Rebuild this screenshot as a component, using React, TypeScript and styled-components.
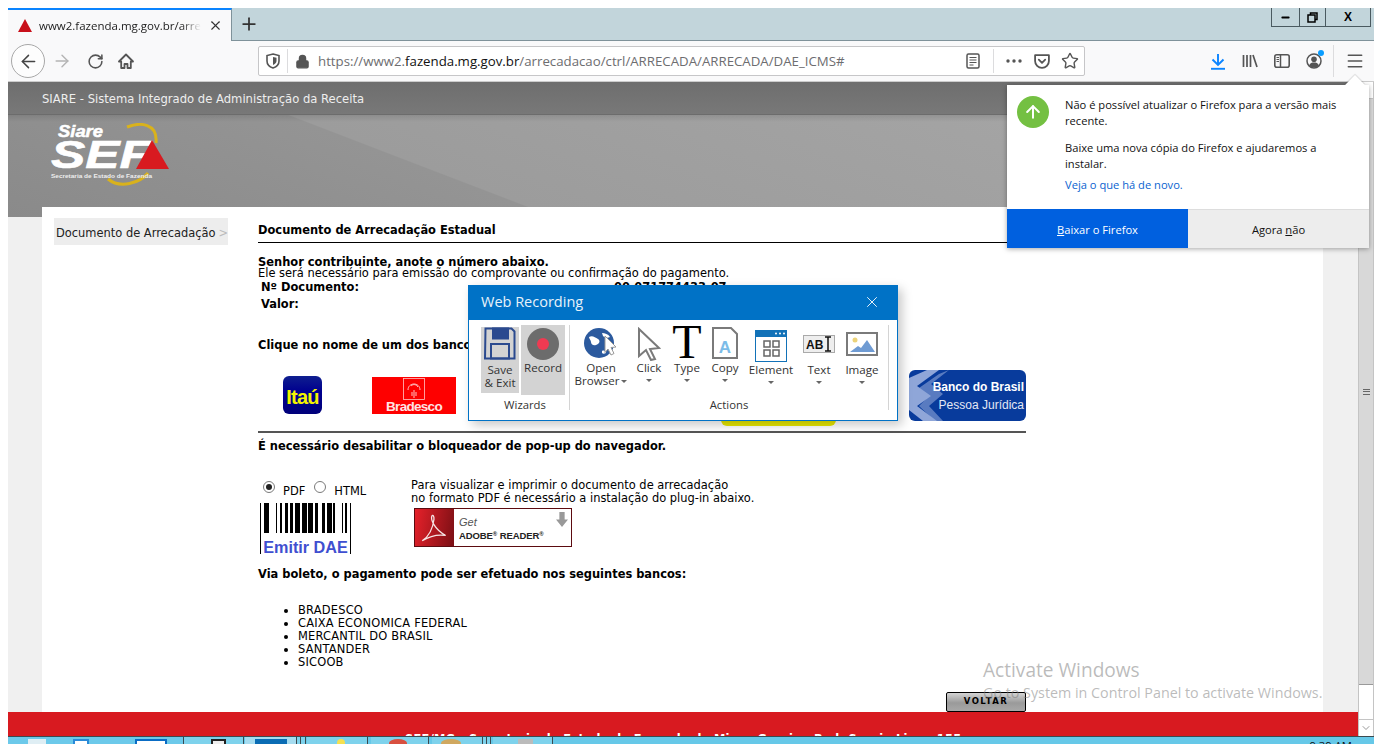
import React from "react";
import styled, { createGlobalStyle } from "styled-components";
import { ArrowLeft, ArrowRight, RotateCw, Lock, Star, X, Plus, Minus, Menu, ArrowUp, ChevronDown } from "lucide-react";

const Global = createGlobalStyle`
  html, body { margin: 0; padding: 0; background: #fff; height: 100%; overflow: hidden; }
  #root { height: 100%; }
`;

const ui = `"Open Sans", "Noto Sans", sans-serif`;
const web = `"DejaVu Sans", Verdana, sans-serif`;

const Screen = styled.div`
  position: relative;
  width: 1382px;
  height: 744px;
  overflow: hidden;
  padding: 8px 8px 0 8px;
  box-sizing: border-box;
  display: flex;
  flex-direction: column;
`;

/* browser chrome */
const TabStrip = styled.div`
  height: 33px;
  flex: none;
  display: flex;
  background: #c2d5db;
  border-bottom: 1px solid #7f929a;
  box-sizing: border-box;
`;
const Tab = styled.div`
  width: 224px;
  height: 33px;
  box-sizing: border-box;
  background: #f9f9fa;
  border-top: 2px solid #0a84ff;
  border-right: 1px solid #7f929a;
  display: flex;
  align-items: center;
  padding: 0 8px 0 10px;
  gap: 7px;
  font: 11.5px ${ui};
  color: #222;
`;
const TabTitle = styled.span`
  flex: 1;
  white-space: nowrap;
  overflow: hidden;
  -webkit-mask-image: linear-gradient(to right, #000 88%, transparent);
  mask-image: linear-gradient(to right, #000 88%, transparent);
`;
const NewTab = styled.div`
  width: 34px;
  display: flex;
  align-items: center;
  justify-content: center;
  color: #333;
  margin-top: -1px;
`;
const WinControls = styled.div`
  margin-left: auto;
  margin-right: 3px;
  width: 100px;
  height: 19px;
  display: flex;
  box-sizing: border-box;
  border: 1px solid #4a5a60;
  border-top: 0;
`;
const WinButton = styled.div<{ $w: number }>`
  width: ${(p) => p.$w}px;
  display: flex;
  align-items: center;
  justify-content: center;
  border-left: 1px solid #4a5a60;
  color: #000;
  font: bold 12px "Liberation Sans", sans-serif;
  &:first-child { border-left: 0; }
`;
const Toolbar = styled.div`
  height: 41px;
  flex: none;
  background: #f9f9fa;
  border-bottom: 1px solid #ccc;
  box-sizing: border-box;
  display: flex;
  align-items: center;
  color: #555;
`;
const BackCircle = styled.div`
  width: 34px;
  height: 34px;
  margin-left: 3px;
  border: 1px solid #a8a8a8;
  border-radius: 50%;
  background: #fdfdfd;
  box-sizing: border-box;
  display: flex;
  align-items: center;
  justify-content: center;
  color: #444;
`;
const ToolIcon = styled.div<{ $w?: number; $c?: string }>`
  width: ${(p) => p.$w ?? 32}px;
  flex: none;
  display: flex;
  align-items: center;
  justify-content: center;
  position: relative;
  color: ${(p) => p.$c ?? "#555"};
`;
const UrlBar = styled.div`
  width: 827px;
  height: 30px;
  flex: none;
  margin-left: 117px;
  background: #fff;
  border: 1px solid #c6c6c8;
  border-radius: 2px;
  box-sizing: border-box;
  display: flex;
  align-items: center;
`;
const VDivider = styled.div<{ $h: number }>`
  width: 1px;
  height: ${(p) => p.$h}px;
  background: #dcdcde;
  flex: none;
`;
const UrlText = styled.div`
  flex: 1;
  padding-left: 1px;
  font: 13.25px ${ui};
  color: #6d6d70;
  white-space: nowrap;
  b { font-weight: 400; color: #111; }
`;
const Spacer = styled.div<{ $w: number }>`
  width: ${(p) => p.$w}px;
  flex: none;
`;
const Dot = styled.span`
  position: absolute;
  top: -3px;
  right: 6px;
  width: 6px;
  height: 6px;
  border-radius: 50%;
  background: #0a9dff;
`;

/* page */
const Viewport = styled.div`
  flex: 1;
  min-height: 0;
  display: flex;
`;
const Page = styled.div`
  width: 1350px;
  display: flex;
  flex-direction: column;
  background: #f0f0f0;
  overflow: hidden;
`;
const TitleBand = styled.div`
  height: 33px;
  flex: none;
  background: linear-gradient(#6e6e6e, #787878);
  border-bottom: 1px solid #6c6c6c;
  box-sizing: border-box;
  padding: 10px 0 0 34px;
  font: 11.6px ${web};
  color: #eee;
`;
const Hero = styled.div`
  height: 102px;
  flex: none;
  padding: 8px 0 0 42px;
  box-sizing: border-box;
  background:
    linear-gradient(rgba(0, 0, 0, 0.1), transparent 7px),
    linear-gradient(21deg, #8a8a8a 0, #949494 33.7%, #9c9c9c 33.9%, #a8a8a8 100%);
`;
const Sheet = styled.div`
  flex: 1;
  min-height: 0;
  margin: -10px 35px 0 34px;
  background: #fff;
  display: flex;
  position: relative;
`;
const SideCol = styled.div`
  width: 216px;
  flex: none;
  padding: 11px 0 0 12px;
  box-sizing: border-box;
`;
const SideItem = styled.div`
  width: 174px;
  height: 27px;
  background: #ededed;
  box-sizing: border-box;
  padding: 8px 0 0 2px;
  font: 11.45px ${web};
  color: #222;
  white-space: nowrap;
  display: flex;
  span { color: #bbb; margin-left: 3px; }
`;
const Main = styled.div`
  width: 768px;
  font: 11.45px/11px ${web};
  color: #000;
`;
const DocTitle = styled.div`
  font: bold 11.45px/14px ${web};
  padding: 16px 0 5px;
  border-bottom: 1px solid #000;
  height: 14px;
`;
const Bold = styled.div<{ $top: number }>`
  font-weight: bold;
  margin-top: ${(p) => p.$top}px;
  white-space: nowrap;
`;
const Plain = styled.div`
  white-space: nowrap;
`;
const DocRow = styled.div<{ $top: number }>`
  display: grid;
  grid-template-columns: 353px 1fr;
  padding-left: 3px;
  margin-top: ${(p) => p.$top}px;
  font-weight: bold;
`;
const BankRow = styled.div`
  position: relative;
  height: 62px;
  margin-top: 13px;
  display: flex;
  align-items: center;
`;
const Itau = styled.div`
  width: 39px;
  height: 38px;
  margin-left: 25px;
  border-radius: 6px;
  background: linear-gradient(#0f1f8f, #00008f 40%, #00007a);
  color: #f4f400;
  font: bold 20px "Liberation Sans", sans-serif;
  letter-spacing: -0.8px;
  display: flex;
  align-items: center;
  justify-content: center;
  padding-top: 5px;
  box-sizing: border-box;
`;
const Bradesco = styled.div`
  width: 84px;
  height: 37px;
  margin-left: 50px;
  background: #fe0000;
  color: #ffe4e4;
  display: flex;
  flex-direction: column;
  align-items: center;
  font: bold 13.5px "Liberation Sans", sans-serif;
  letter-spacing: -0.7px;
  line-height: 14px;
  svg { display: block; margin-top: 1px; }
`;
const YellowBank = styled.div`
  width: 115px;
  height: 62px;
  margin-left: 265px;
  border-radius: 6px;
  background: #e8e800;
`;
const BB = styled.div`
  width: 117px;
  height: 51px;
  margin-left: 73px;
  border-radius: 6px;
  background: #083b9c;
  color: #fff;
  position: relative;
  overflow: hidden;
  font: 12px/18px "Liberation Sans", sans-serif;
  text-align: right;
  padding: 8px 2px 0 0;
  box-sizing: border-box;
  svg { position: absolute; left: 0; top: 0; }
  b, span { display: block; position: relative; }
  span { color: #e4e8f4; }
`;
const Rule = styled.div`
  height: 2px;
  background: #555;
  margin-top: 5px;
`;
const OptionsRow = styled.div`
  display: flex;
  margin-top: 27px;
`;
const PdfCol = styled.div`
  width: 153px;
  flex: none;
`;
const Radios = styled.div`
  height: 24px;
  box-sizing: border-box;
  padding: 2px 0 0 5px;
  display: flex;
  align-items: flex-start;
  span { margin: 5px 0 0 8px; }
  span + i { margin-left: 9px; }
`;
const Radio = styled.i<{ $on?: boolean }>`
  display: block;
  width: 12px;
  height: 12px;
  border: 1px solid #7a7a7a;
  border-radius: 50%;
  box-sizing: border-box;
  background: #fff;
  position: relative;
  &::after {
    content: "";
    display: ${(p) => (p.$on ? "block" : "none")};
    position: absolute;
    inset: 2px;
    border-radius: 50%;
    background: #222;
  }
`;
const Barcode = styled.div`
  width: 91px;
  margin-left: 2px;
  height: 51px;
  box-sizing: border-box;
  border-left: 1px solid #000;
  border-right: 1px solid #000;
  color: #3f4fd0;
  font: bold 16.2px/16px "Liberation Sans", sans-serif;
  text-align: center;
  white-space: nowrap;
  svg { display: block; margin-bottom: 6px; }
`;
const PdfNote = styled.div`
  line-height: 13px;
  white-space: nowrap;
`;
const AdobeBadge = styled.div`
  width: 158px;
  height: 39px;
  margin: 3px 0 0 3px;
  border: 1px solid #5c0b10;
  box-sizing: border-box;
  display: flex;
  background: #fff;
  position: relative;
`;
const AdobeLogo = styled.div`
  width: 39px;
  background: linear-gradient(100deg, #e6212a, #7a0f14);
  display: flex;
  align-items: center;
  justify-content: center;
`;
const AdobeText = styled.div`
  padding: 7px 0 0 5px;
  font: 9.5px/13px "Liberation Sans", sans-serif;
  color: #333;
  i { display: block; font-size: 11px; line-height: 12px; color: #555; }
  b { font-weight: bold; color: #222; letter-spacing: -0.1px; }
  small { font-size: 6px; vertical-align: 3px; }
`;
const AdobeArrow = styled.div`
  position: absolute;
  right: 3px;
  top: 3px;
  width: 12px;
  height: 15px;
  background: #999;
  clip-path: polygon(28% 0, 72% 0, 72% 50%, 100% 50%, 50% 100%, 0 50%, 28% 50%);
`;
const BankList = styled.ul`
  margin: 24px 0 0;
  padding: 0 0 0 40px;
  line-height: 13px;
  letter-spacing: 0.2px;
  list-style: disc;
`;
const Voltar = styled.div`
  position: absolute;
  left: 904px;
  top: 485px;
  width: 80px;
  height: 20px;
  border: 1px solid #000;
  border-radius: 2px;
  box-sizing: border-box;
  background: linear-gradient(#d4d4d4, #9a9a9a 55%, #a8a8a8);
  font: bold 8.5px "DejaVu Sans", sans-serif;
  letter-spacing: 1.4px;
  text-align: center;
  line-height: 17px;
`;
const Footer = styled.div`
  height: 24px;
  flex: none;
  background: #d81a20;
  color: #fff;
  overflow: hidden;
  font: bold 11.45px/14px ${web};
  letter-spacing: 0.27px;
  padding: 20px 0 0 397px;
  white-space: nowrap;
  box-sizing: border-box;
`;
const Scrollbar = styled.div`
  width: 16px;
  flex: none;
  background: #fff;
  border: 1px solid #c4c4c4;
  border-width: 0 1px;
  box-sizing: border-box;
  display: flex;
  flex-direction: column;
`;
const ScrollEnd = styled.div`
  height: 16px;
  flex: none;
  display: flex;
  align-items: center;
  justify-content: center;
  color: #777;
  border-bottom: 1px solid #c4c4c4;
`;
const ScrollEndBottom = styled(ScrollEnd)`
  margin-top: auto;
  border-bottom: 0;
  border-top: 1px solid #c4c4c4;
`;
const Thumb = styled.div`
  height: 585px;
  background: #d8d8d8;
  border-bottom: 1px solid #999;
  display: flex;
  align-items: center;
  justify-content: center;
  &::after {
    content: "";
    width: 7px;
    height: 6px;
    background: repeating-linear-gradient(#666 0 1px, transparent 1px 2.5px);
  }
`;
const Taskbar = styled.div`
  height: 8px;
  flex: none;
  background: #66c8e8;
  border-top: 1px solid #3b4a50;
  box-sizing: border-box;
  display: flex;
  position: relative;
  overflow: hidden;
`;
const TaskCell = styled.div<{ $w: number; $active?: boolean; $plain?: boolean; $gap?: number }>`
  width: ${(p) => p.$w}px;
  flex: none;
  box-sizing: border-box;
  margin-right: ${(p) => p.$gap ?? 0}px;
  border-right: 1px solid #3b4a50;
  background: ${(p) => (p.$plain ? "#6cc9ea" : p.$active ? "#a6dcf0" : "#7ed2ec")};
  display: flex;
`;
const TaskIcon = styled.div<{ $x: number; $w: number; $bg: string; $round?: boolean; $border?: string }>`
  width: ${(p) => p.$w}px;
  height: 8px;
  margin: 2px 0 0 ${(p) => p.$x}px;
  background: ${(p) => p.$bg};
  border: ${(p) => (p.$border ? `2px solid ${p.$border}` : "0")};
  box-sizing: border-box;
  border-radius: ${(p) => (p.$round ? "50% 50% 0 0" : "0")};
`;
const Clock = styled.div`
  margin-left: auto;
  margin-right: 22px;
  margin-top: 1px;
  font: 11.3px "Open Sans", sans-serif;
  color: #111;
  line-height: 16px;
`;

/* update doorhanger */
const Doorhanger = styled.div`
  position: absolute;
  left: 1007px;
  top: 85px;
  width: 362px;
  height: 163px;
  background: #fff;
  box-shadow: 0 1px 5px rgba(0, 0, 0, 0.35);
  display: flex;
  flex-direction: column;
  font: 11.15px/16px ${ui};
  color: #111;
  &::before {
    content: "";
    position: absolute;
    top: -7px;
    right: 7px;
    width: 14px;
    height: 14px;
    background: #fff;
    transform: rotate(45deg);
    box-shadow: -1px -1px 1px rgba(0, 0, 0, 0.12);
  }
`;
const DoorBody = styled.div`
  flex: 1;
  display: flex;
  padding: 12px 16px 0 10px;
  gap: 16px;
  position: relative;
`;
const GreenDot = styled.div`
  width: 32px;
  height: 32px;
  margin-top: -1px;
  border-radius: 50%;
  background: #74c042;
  color: #fff;
  flex: none;
  display: flex;
  align-items: center;
  justify-content: center;
`;
const DoorText = styled.div`
  p { margin: 0 0 11px; }
  a { color: #0a63d0; display: block; margin-top: -6px; }
`;
const DoorButtons = styled.div`
  display: flex;
  height: 39px;
  border-top: 1px solid #ddd;
  box-sizing: border-box;
  u { text-decoration: underline; }
`;
const DoorButton = styled.div<{ $primary?: boolean }>`
  flex: 1;
  display: flex;
  align-items: center;
  justify-content: center;
  padding-top: 2px;
  background: ${(p) => (p.$primary ? "#0060df" : "#ededed")};
  color: ${(p) => (p.$primary ? "#fff" : "#111")};
  margin-top: ${(p) => (p.$primary ? "-1px" : "0")};
`;

/* Web Recording dialog */
const Dialog = styled.div`
  position: absolute;
  left: 468px;
  top: 285px;
  width: 430px;
  height: 136px;
  background: #fff;
  border: 1px solid #0072c6;
  box-sizing: border-box;
  box-shadow: 4px 4px 10px rgba(0, 0, 0, 0.22);
  font: 12px ${ui};
  color: #333;
`;
const DialogHead = styled.div`
  height: 34px;
  box-sizing: border-box;
  padding: 0 16px 3px 12px;
  background: #0072c6;
  color: #e8f2fa;
  font-size: 14.5px;
  display: flex;
  align-items: center;
  justify-content: space-between;
`;
const Ribbon = styled.div`
  display: flex;
  padding-left: 12px;
  height: 100px;
`;
const RibbonGroup = styled.div<{ $w: number }>`
  width: ${(p) => p.$w}px;
  flex: none;
  border-right: 1px solid #d4d4d4;
  height: 85px;
  margin-top: 5px;
  display: flex;
  flex-direction: column;
  position: relative;
  box-sizing: border-box;
`;
const GroupItems = styled.div`
  display: flex;
  align-items: flex-start;
  height: 70px;
`;
const GroupLabel = styled.div`
  position: absolute;
  left: 0;
  right: 0;
  top: 72px;
  text-align: center;
  font-size: 11.3px;
  line-height: 16px;
`;
const Tool = styled.div<{ $w: number; $bg?: boolean; $top?: number; $h?: number }>`
  width: ${(p) => p.$w}px;
  height: ${(p) => (p.$h ? `${p.$h}px` : "auto")};
  flex: none;
  margin-top: ${(p) => p.$top ?? 0}px;
  background: ${(p) => (p.$bg ? "#d3d3d3" : "transparent")};
  display: flex;
  flex-direction: column;
  align-items: center;
  text-align: center;
  font-size: 11.6px;
  line-height: 13px;
  svg { display: block; flex: none; }
`;
const ToolLabel = styled.div<{ $top: number }>`
  margin-top: ${(p) => p.$top}px;
  white-space: nowrap;
`;
const Caret = styled.i`
  display: inline-block;
  border: 3px solid transparent;
  border-top: 3px solid #666;
  border-bottom: 0;
  vertical-align: middle;
  margin-left: 2px;
`;
const CaretBelow = styled(Caret)`
  display: block;
  margin: 5px auto 0;
`;
const RecordDisc = styled.svg`
  margin-top: 3px;
`;

const Watermark = styled.div`
  position: absolute;
  left: 983px;
  top: 659px;
  color: rgba(120, 120, 120, 0.5);
  font: 19.1px/22px ${ui};
  pointer-events: none;
  white-space: nowrap;
  div { font-size: 14.3px; line-height: 24px; }
`;

function PocketIcon() {
  return (
    <svg width="18" height="17" viewBox="0 0 16 16" fill="none" stroke="#555" strokeWidth="1.7" strokeLinejoin="round" strokeLinecap="round">
      <path d="M1.5 2h13v5.500a6.500 6.500 0 0 1-13 0z" />
      <path d="M5 6.200l3 3 3-3" />
    </svg>
  );
}

function ShieldIcon() {
  return (
    <svg width="14" height="16" viewBox="0 0 14 16">
      <path d="M7 1l6 1.500V8c0 3.500-3 6-6 7-3-1-6-3.500-6-7V2.500z" fill="none" stroke="#555" strokeWidth="1.600" />
      <path d="M7 4l3.500 .8V8c0 1.800-1.500 3-3.500 4z" fill="#555" />
    </svg>
  );
}

function ReaderIcon() {
  return (
    <svg width="14" height="16" viewBox="0 0 14 16" fill="none" stroke="#555">
      <rect x="1" y="1" width="12" height="14" rx="1.500" strokeWidth="1.500" />
      <path d="M3.500 4.500h7M3.500 7h7M3.500 9.500h7M3.500 12h4" strokeWidth="1" />
    </svg>
  );
}

function HomeIcon() {
  return (
    <svg width="16" height="16" viewBox="0 0 16 16" fill="none" stroke="#555" strokeWidth="1.800" strokeLinejoin="round">
      <path d="M8 1.500L1 8.500h2.200V15h3.300v-4h3v4h3.300V8.500H15z" />
    </svg>
  );
}

function DownloadIcon() {
  return (
    <svg width="16" height="17" viewBox="0 0 16 17" fill="none" stroke="#0a84ff" strokeWidth="1.900">
      <path d="M8 1v10.500M2.500 6.500L8 12l5.500-5.500" />
      <path d="M1 15.800h14" />
    </svg>
  );
}

function LibraryIcon() {
  return (
    <svg width="16" height="14" viewBox="0 0 16 14" stroke="#555" strokeWidth="1.700" fill="none">
      <path d="M1.500 1v12M5 1v12M8.500 1v12M11 1l4 12" />
    </svg>
  );
}

function SidebarIcon() {
  return (
    <svg width="16" height="14" viewBox="0 0 16 14" fill="none" stroke="#555">
      <rect x=".8" y=".8" width="14.400" height="12.400" rx="2" strokeWidth="1.600" />
      <path d="M6.500 1v12" strokeWidth="1.500" />
      <path d="M2.500 3.500h2.500M2.500 5.500h2.500M2.500 7.500h2.500" strokeWidth="1" />
    </svg>
  );
}

function AccountIcon() {
  return (
    <svg width="16" height="16" viewBox="0 0 16 16" fill="none">
      <circle cx="8" cy="8" r="7" stroke="#555" strokeWidth="1.500" />
      <circle cx="8" cy="6.200" r="2.800" fill="#555" />
      <path d="M3 12.500c1-2.500 3-3 5-3s4 .5 5 3c-1.500 1.500-3 2-5 2s-3.500-.5-5-2z" fill="#555" />
    </svg>
  );
}

function SefLogo() {
  return (
    <svg width="122" height="66" viewBox="0 0 122 66">
      <path d="M77 4C90-1 108 0 106 20M98 50C90 60 70 66 58 56" fill="none" stroke="#d9b21c" strokeWidth="3" />
      <text x="8" y="14" fill="#fff" stroke="#fff" strokeWidth=".5" fontFamily="Liberation Sans" fontWeight="bold" fontStyle="italic" fontSize="16" textLength="45" lengthAdjust="spacingAndGlyphs">Siare</text>
      <text x="1" y="45" fill="#fff" stroke="#fff" strokeWidth=".6" fontFamily="Liberation Sans" fontWeight="bold" fontStyle="italic" fontSize="38" textLength="100" lengthAdjust="spacingAndGlyphs">SEF</text>
      <polygon points="102,17 119,46 86,46" fill="#d81a20" />
      <text x="1" y="55" fill="#eee" fontFamily="Liberation Sans" fontWeight="bold" fontSize="6" textLength="101" lengthAdjust="spacingAndGlyphs">Secretaria de Estado de Fazenda</text>
    </svg>
  );
}

function BradescoMark() {
  return (
    <svg width="22" height="22" viewBox="0 0 22 22" fill="none" stroke="#ffc4c4">
      <rect x=".5" y=".5" width="21" height="21" strokeWidth=".8" />
      <path d="M5 12c0-8 12-8 12 0M8 8c2-2 5-2 7 1M11 12v8M9 14v4M13 14v4" strokeWidth="1" />
    </svg>
  );
}

const BARS = [
  [4, 5], [16, 1], [20, 2], [25, 3], [30, 3], [35, 5], [42, 5], [48, 5], [55, 3], [62, 3], [67, 5], [73, 2], [82, 1], [85, 2],
];

function BarcodeArt() {
  return (
    <svg width="89" height="30" viewBox="0 0 89 30">
      {BARS.map(([x, w]) => (
        <rect key={x} x={x - 1} y="0" width={w} height="30" fill="#000" />
      ))}
    </svg>
  );
}

export default function App() {
  return (
    <Screen>
      <Global />
      <TabStrip>
        <Tab>
          <svg width="14" height="13" viewBox="0 0 14 13"><polygon points="7,0 14,13 0,13" fill="#c8101a" /></svg>
          <TabTitle>www2.fazenda.mg.gov.br/arrecadacao</TabTitle>
          <X size={15} strokeWidth={1.7} color="#333" />
        </Tab>
        <NewTab><Plus size={20} strokeWidth={2.1} /></NewTab>
        <WinControls>
          <WinButton $w={28}><Minus size={11} strokeWidth={4} /></WinButton>
          <WinButton $w={26}>
            <svg width="11" height="11" viewBox="0 0 11 11" fill="none" stroke="#000" strokeWidth="1.500"><rect x="1" y="3" width="7" height="7" /><path d="M3.500 3V1h6.500v6.500H8" /></svg>
          </WinButton>
          <WinButton $w={46}>X</WinButton>
        </WinControls>
      </TabStrip>
      <Toolbar>
        <BackCircle><ArrowLeft size={21} strokeWidth={1.7} /></BackCircle>
        <ToolIcon $w={34} $c="#b4b4b4"><ArrowRight size={20} strokeWidth={1.7} /></ToolIcon>
        <ToolIcon $w={32}><RotateCw size={17} strokeWidth={2.2} /></ToolIcon>
        <ToolIcon $w={30}><HomeIcon /></ToolIcon>
        <UrlBar>
          <ToolIcon $w={28}><ShieldIcon /></ToolIcon>
          <VDivider $h={24} />
          <ToolIcon $w={29}><Lock size={15} strokeWidth={2} fill="#555" /></ToolIcon>
          <UrlText>https://www2.<b>fazenda.mg.gov.br</b>/arrecadacao/ctrl/ARRECADA/ARRECADA/DAE_ICMS#</UrlText>
          <ToolIcon $w={28}><ReaderIcon /></ToolIcon>
          <Spacer $w={6} />
          <VDivider $h={24} />
          <Spacer $w={6} />
          <ToolIcon $w={28}>
            <svg width="16" height="4" viewBox="0 0 16 4" fill="#555"><circle cx="2" cy="2" r="1.700" /><circle cx="8" cy="2" r="1.700" /><circle cx="14" cy="2" r="1.700" /></svg>
          </ToolIcon>
          <ToolIcon $w={28}><PocketIcon /></ToolIcon>
          <ToolIcon $w={28}><Star size={18} strokeWidth={1.9} /></ToolIcon>
        </UrlBar>
        <Spacer $w={117} />
        <ToolIcon $w={32}><DownloadIcon /></ToolIcon>
        <ToolIcon $w={32}><LibraryIcon /></ToolIcon>
        <ToolIcon $w={32}><SidebarIcon /></ToolIcon>
        <ToolIcon $w={32}><AccountIcon /><Dot /></ToolIcon>
        <Spacer $w={3} />
        <VDivider $h={32} />
        <Spacer $w={2} />
        <ToolIcon $w={38}><Menu size={20} strokeWidth={1.8} /></ToolIcon>
      </Toolbar>
      <Viewport>
        <Page>
          <TitleBand>SIARE - Sistema Integrado de Administração da Receita</TitleBand>
          <Hero><SefLogo /></Hero>
          <Sheet>
            <SideCol>
              <SideItem>Documento de Arrecadação<span>&gt;</span></SideItem>
            </SideCol>
            <Main>
              <DocTitle>Documento de Arrecadação Estadual</DocTitle>
              <Bold $top={14}>Senhor contribuinte, anote o número abaixo.</Bold>
              <Plain>Ele será necessário para emissão do comprovante ou confirmação do pagamento.</Plain>
              <DocRow $top={3}><span>Nº Documento:</span><span>00.071774433-07</span></DocRow>
              <DocRow $top={6}><span>Valor:</span></DocRow>
              <Bold $top={30}>Clique no nome de um dos bancos abaixo para efetuar o pagamento.</Bold>
              <BankRow>
                <Itau>Itaú</Itau>
                <Bradesco><BradescoMark />Bradesco</Bradesco>
                <YellowBank />
                <BB>
                  <svg width="60" height="51" viewBox="0 0 60 51" fill="#8fa6d8">
                    <polygon points="0,8 18,0 30,0 8,16 22,26 8,36 28,51 14,51 0,40" />
                    <polygon points="20,26 10,18 30,4 40,0 22,14 34,24 20,36 34,51 26,51 10,36" opacity=".6" />
                  </svg>
                  <b>Banco do Brasil</b>
                  <span>Pessoa Jurídica</span>
                </BB>
              </BankRow>
              <Rule />
              <Bold $top={8}>É necessário desabilitar o bloqueador de pop-up do navegador.</Bold>
              <OptionsRow>
                <PdfCol>
                  <Radios>
                    <Radio $on /><span>PDF</span><Radio /><span>HTML</span>
                  </Radios>
                  <Barcode>
                    <BarcodeArt />
                    Emitir DAE
                  </Barcode>
                </PdfCol>
                <div>
                  <PdfNote>
                    Para visualizar e imprimir o documento de arrecadação<br />
                    no formato PDF é necessário a instalação do plug-in abaixo.
                  </PdfNote>
                  <AdobeBadge>
                    <AdobeLogo>
                      <svg width="30" height="32" viewBox="0 0 28 30" fill="none" stroke="#f5e4e4" strokeWidth="1.200">
                        <path d="M2 27c6-4 10-12 11-20 .3-3-1-5-2-3-1 3 2 12 13 18-6-1-14 0-22 5z" />
                      </svg>
                    </AdobeLogo>
                    <AdobeText>
                      <i>Get</i>
                      <b>ADOBE<small>®</small> READER<small>®</small></b>
                    </AdobeText>
                    <AdobeArrow />
                  </AdobeBadge>
                </div>
              </OptionsRow>
              <Bold $top={15}>Via boleto, o pagamento pode ser efetuado nos seguintes bancos:</Bold>
              <BankList>
                <li>BRADESCO</li>
                <li>CAIXA ECONOMICA FEDERAL</li>
                <li>MERCANTIL DO BRASIL</li>
                <li>SANTANDER</li>
                <li>SICOOB</li>
              </BankList>
            </Main>
            <Voltar>VOLTAR</Voltar>
          </Sheet>
          <Footer>SEF/MG - Secretaria de Estado de Fazenda de Minas Gerais - Rod. Sergio Lima, 155</Footer>
        </Page>
        <Scrollbar>
          <ScrollEnd />
          <Thumb />
          <ScrollEndBottom><ChevronDown size={12} strokeWidth={1.5} /></ScrollEndBottom>
        </Scrollbar>
      </Viewport>
      <Taskbar>
        <TaskCell $w={176} $plain>
          <TaskIcon $x={20} $w={18} $bg="#dfeef4" />
          <TaskIcon $x={27} $w={16} $bg="#fff" $border="#2a8ad8" />
          <TaskIcon $x={46} $w={32} $bg="#fff" $border="#0a6cc4" />
        </TaskCell>
        <TaskCell $w={60} $gap={1}><TaskIcon $x={27} $w={15} $bg="#eee" $border="#222" /></TaskCell>
        <TaskCell $w={52} $active><TaskIcon $x={10} $w={32} $bg="#0a6cb4" /></TaskCell>
        <TaskCell $w={4} />
        <TaskCell $w={5} $gap={1} />
        <TaskCell $w={61} $gap={3}><TaskIcon $x={30} $w={8} $bg="#f5e050" $round /></TaskCell>
        <TaskCell $w={58} $gap={3}><TaskIcon $x={18} $w={18} $bg="#d85040" $round /></TaskCell>
        <TaskCell $w={51}><TaskIcon $x={9} $w={20} $bg="#d0a860" $round /></TaskCell>
        <TaskCell $w={4} />
        <TaskCell $w={4} $gap={2} />
        <TaskCell $w={60}><TaskIcon $x={25} $w={15} $bg="#bbb" /></TaskCell>
        <Clock>9:39 AM</Clock>
      </Taskbar>

      <Doorhanger>
        <DoorBody>
          <GreenDot><ArrowUp size={20} strokeWidth={2.4} /></GreenDot>
          <DoorText>
            <p>Não é possível atualizar o Firefox para a versão mais recente.</p>
            <p>Baixe uma nova cópia do Firefox e ajudaremos a instalar.</p>
            <a>Veja o que há de novo.</a>
          </DoorText>
        </DoorBody>
        <DoorButtons>
          <DoorButton $primary><span><u>B</u>aixar o Firefox</span></DoorButton>
          <DoorButton><span>Agora <u>n</u>ão</span></DoorButton>
        </DoorButtons>
      </Doorhanger>

      <Dialog>
        <DialogHead>
          Web Recording
          <X size={18} strokeWidth={1.2} color="#fff" />
        </DialogHead>
        <Ribbon>
          <RibbonGroup $w={89}>
            <GroupItems>
              <Tool $w={38} $bg $top={2} $h={66}>
                <svg width="32" height="33" viewBox="0 0 32 33" fill="none" stroke="#2b4a8f" strokeWidth="2">
                  <path d="M1.500 1.500h26l3 3v27h-29.500z" fill="#d3d3d3" />
                  <rect x="9" y="1.500" width="15" height="10" fill="#2b4a8f" />
                  <rect x="7" y="17" width="18" height="14.500" />
                </svg>
                <ToolLabel $top={3}>Save<br />&amp; Exit</ToolLabel>
              </Tool>
              <Spacer $w={2} />
              <Tool $w={44} $bg $h={70}>
                <RecordDisc width="32" height="32" viewBox="0 0 32 32">
                  <circle cx="16" cy="16" r="16" fill="#6c6c6c" />
                  <circle cx="16" cy="16" r="6" fill="#ef3a52" />
                </RecordDisc>
                <ToolLabel $top={1}>Record</ToolLabel>
              </Tool>
            </GroupItems>
            <GroupLabel>Wizards</GroupLabel>
          </RibbonGroup>
          <RibbonGroup $w={319}>
            <GroupItems>
              <Tool $w={62} $top={2}>
                <svg width="34" height="32" viewBox="0 0 34 32">
                  <circle cx="15" cy="16" r="15" fill="#2c5a9e" />
                  <path d="M5 10c3-2 6 0 9 2s1 5-2 6-5-1-5-3-2-3-2-5zM18 6c3 0 6 1 8 4-2 1-5 1-7-1zM18 24c2-1 4 0 4 2-2 1-3 1-4 0z" fill="#fff" />
                  <path d="M21 9l11 11-5 .5 3 6-3 1.500-3-6-3 3.500z" fill="#fff" stroke="#999" strokeWidth="1" />
                </svg>
                <ToolLabel $top={2}>Open<br />Browser<Caret /></ToolLabel>
              </Tool>
              <Tool $w={34} $top={2}>
                <svg width="24" height="34" viewBox="0 0 24 34" fill="#fff" stroke="#7a7a7a" strokeWidth="2">
                  <path d="M2 2l20 19-9 1 5 10-4 1-5-10-7 6z" />
                </svg>
                <ToolLabel $top={0}>Click</ToolLabel>
                <CaretBelow />
              </Tool>
              <Tool $w={42}>
                <svg width="30" height="34" viewBox="0 0 30 34">
                  <text x="15" y="33" textAnchor="middle" fontFamily="Liberation Serif" fontSize="48" fill="#000">T</text>
                </svg>
                <ToolLabel $top={2}>Type</ToolLabel>
                <CaretBelow />
              </Tool>
              <Tool $w={34} $top={2}>
                <svg width="26" height="32" viewBox="0 0 26 32" fill="none">
                  <path d="M1 1h18l6 6v24h-24z" fill="#fff" stroke="#7a7a7a" strokeWidth="2" />
                  <text x="13" y="26" textAnchor="middle" fontFamily="Liberation Sans" fontWeight="bold" fontSize="17" fill="#7cbce8">A</text>
                </svg>
                <ToolLabel $top={2}>Copy</ToolLabel>
                <CaretBelow />
              </Tool>
              <Tool $w={58} $top={5}>
                <svg width="32" height="32" viewBox="0 0 32 32">
                  <rect x=".5" y=".5" width="31" height="31" fill="#fff" stroke="#1272b8" />
                  <rect x="0" y="0" width="32" height="7" fill="#1272b8" />
                  <g fill="#fff"><circle cx="21" cy="3.500" r="1" /><circle cx="25" cy="3.500" r="1" /><circle cx="29" cy="3.500" r="1" /></g>
                  <g fill="none" stroke="#666" strokeWidth="1.500">
                    <rect x="9" y="11" width="6" height="6" /><rect x="18" y="11" width="6" height="6" />
                    <rect x="9" y="20" width="6" height="6" /><rect x="18" y="20" width="6" height="6" />
                  </g>
                </svg>
                <ToolLabel $top={1}>Element</ToolLabel>
                <CaretBelow />
              </Tool>
              <Tool $w={38} $top={10}>
                <svg width="32" height="20" viewBox="0 0 32 20">
                  <rect x=".5" y=".5" width="31" height="17" fill="#eee" stroke="#aaa" />
                  <text x="3" y="14" fontFamily="Liberation Sans" fontWeight="bold" fontSize="12" fill="#111">AB</text>
                  <path d="M22 2h6M25 2v14M22 16h6" stroke="#111" strokeWidth="1.500" />
                </svg>
                <ToolLabel $top={8}>Text</ToolLabel>
                <CaretBelow />
              </Tool>
              <Tool $w={48} $top={7}>
                <svg width="32" height="24" viewBox="0 0 32 24">
                  <rect x="1" y="1" width="30" height="22" fill="#fff" stroke="#7a7a7a" strokeWidth="2" />
                  <circle cx="9" cy="8" r="2.500" fill="#ecd37a" />
                  <path d="M4 20l8-6 3 2 6-8 8 12z" fill="#6f9bd3" />
                </svg>
                <ToolLabel $top={7}>Image</ToolLabel>
                <CaretBelow />
              </Tool>
            </GroupItems>
            <GroupLabel>Actions</GroupLabel>
          </RibbonGroup>
        </Ribbon>
      </Dialog>

      <Watermark>
        Activate Windows
        <div>Go to System in Control Panel to activate Windows.</div>
      </Watermark>
    </Screen>
  );
}
